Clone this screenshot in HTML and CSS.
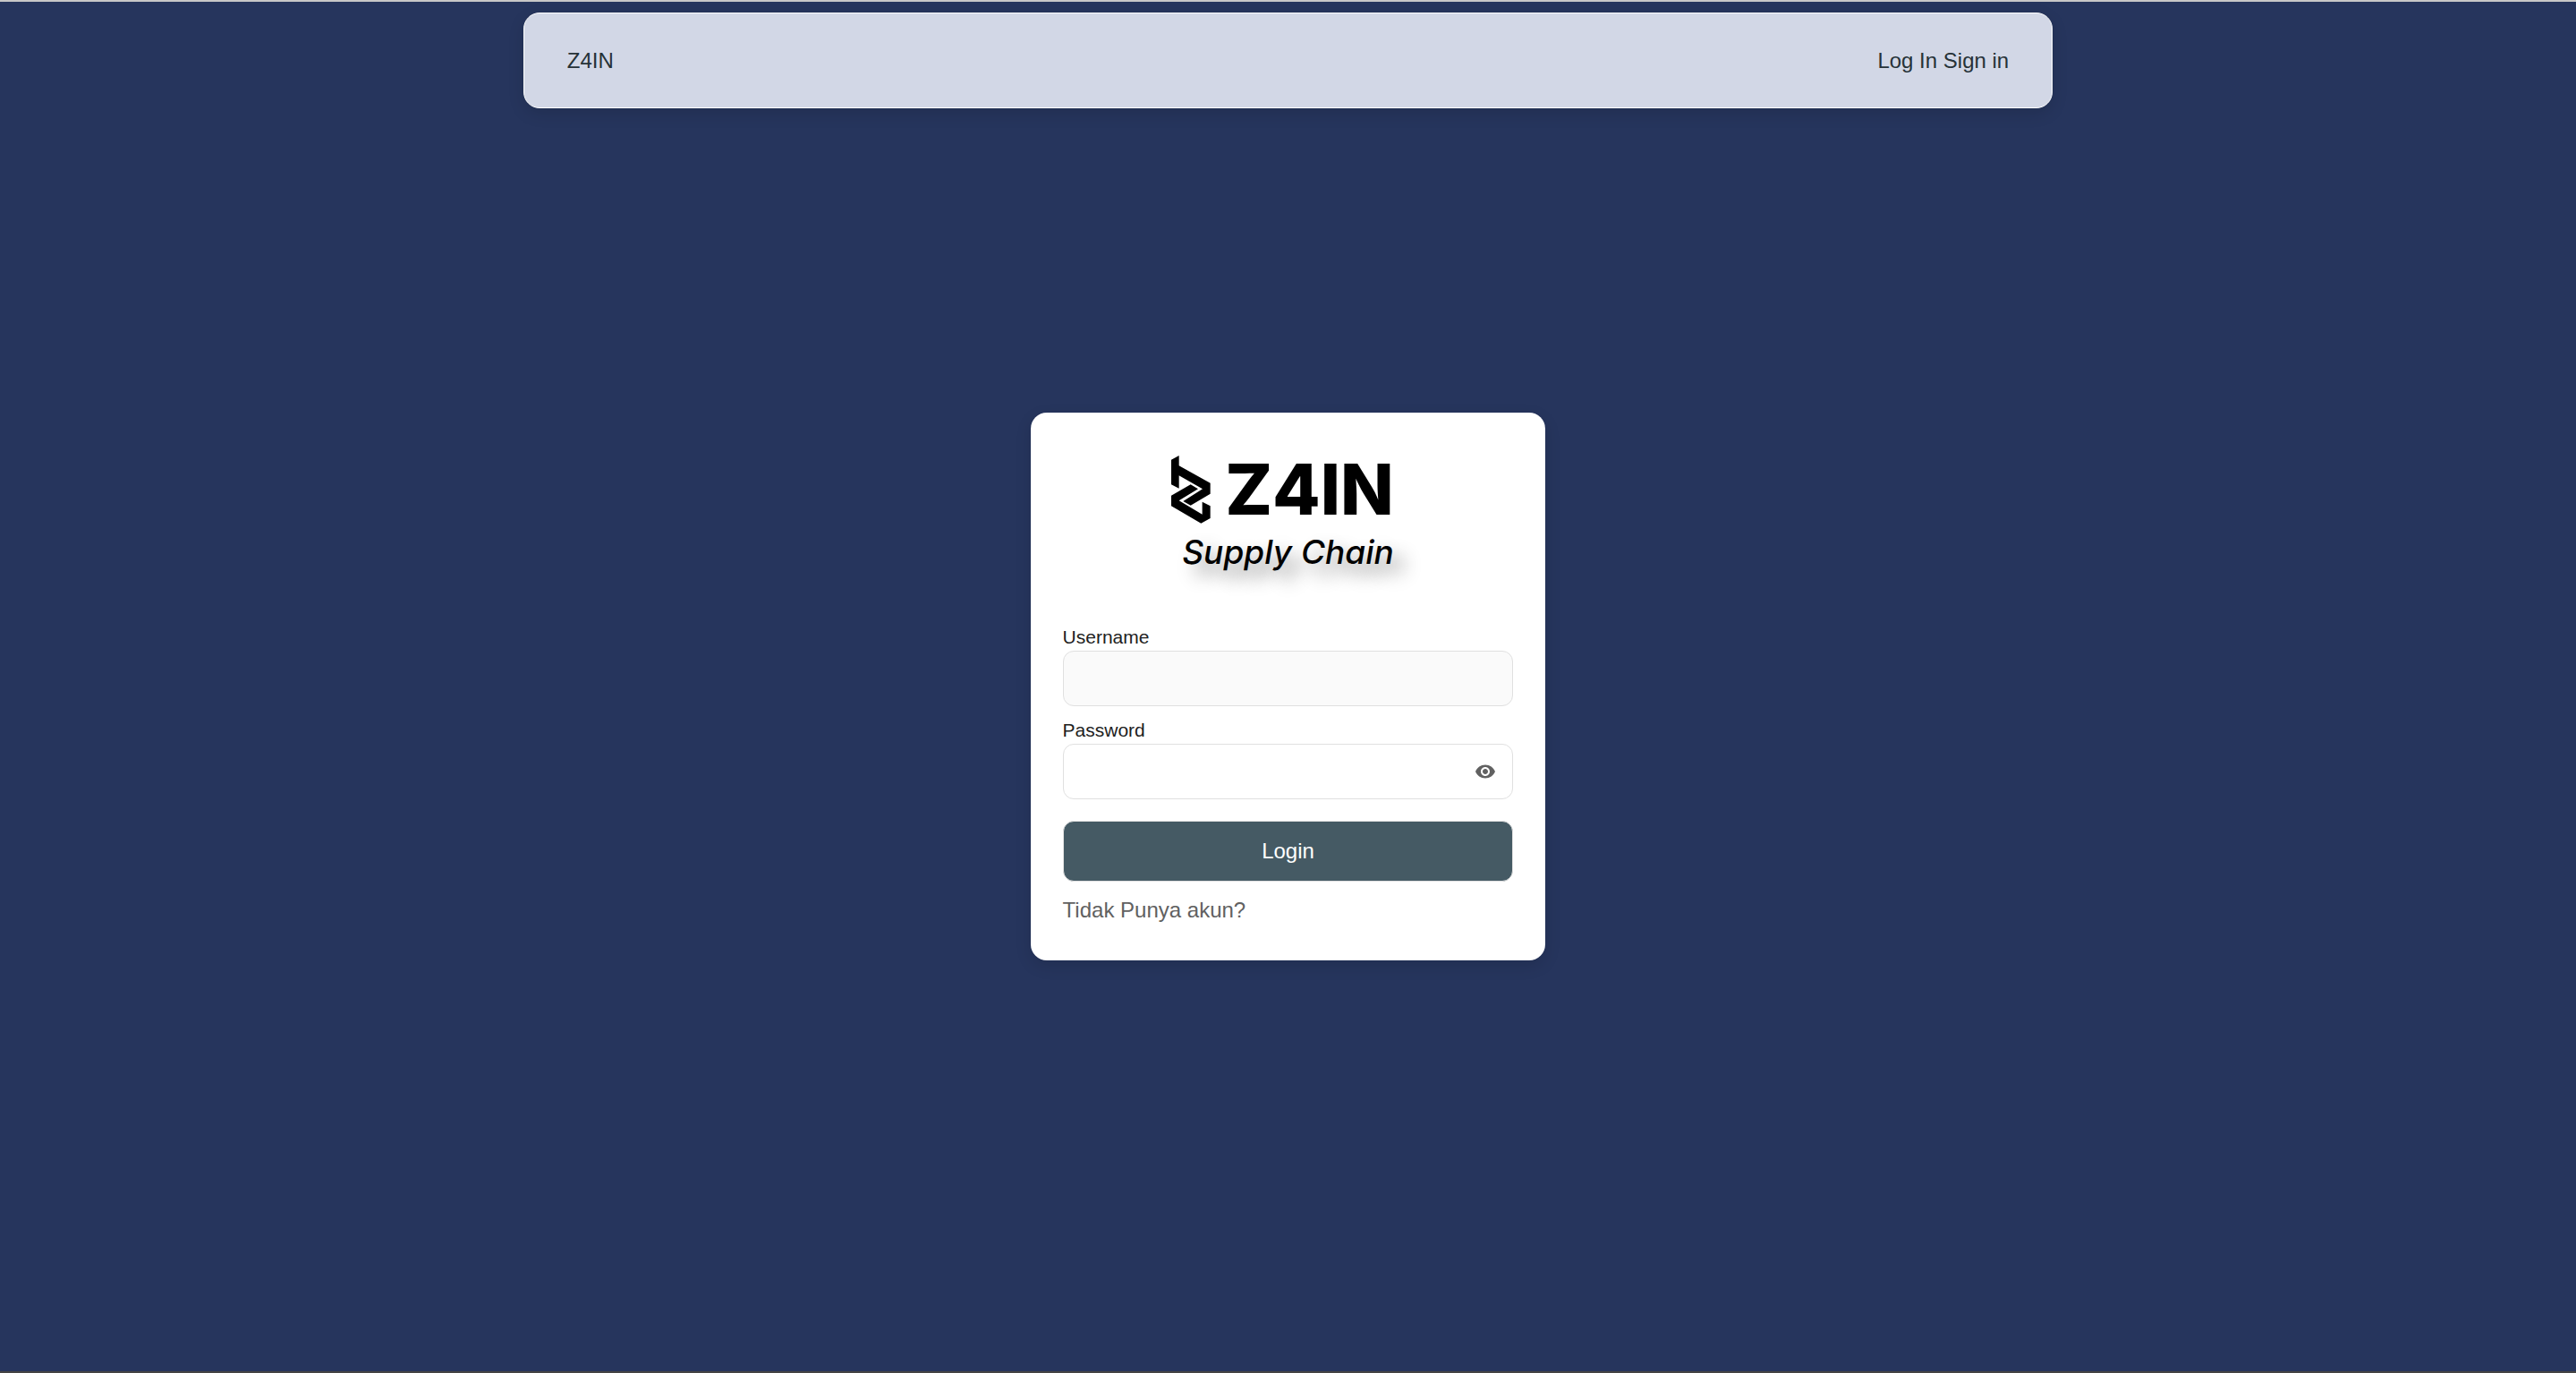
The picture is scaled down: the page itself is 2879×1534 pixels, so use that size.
FILE: index.html
```html
<!DOCTYPE html>
<html lang="id">
<head>
<meta charset="utf-8">
<meta name="viewport" content="width=device-width, initial-scale=1">
<title>Z4IN Supply Chain</title>
<link rel="stylesheet" href="styles.css">
</head>
<body>
<header class="navbar">
  <a class="nav-link" href="#">Z4IN</a>
  <nav>
    <a class="nav-link" href="#">Log In</a>
    <a class="nav-link" href="#">Sign in</a>
  </nav>
</header>
<main class="page">
  <form class="card">
    <div class="logo">
      <div class="logo-group">
        <div class="logo-row">
          <svg class="logo-mark" viewBox="508 178 132 228" aria-hidden="true">
            <path d="M508 192L534 178V212L639 270V306L573 345L548 331L613 290L534 245V288L508 275Z"/>
            <path d="M508 312L573 275L598 290L534 329L612 375V333L639 347V388L608 405L508 347Z"/>
          </svg>
          <span class="logo-name">Z4IN</span>
        </div>
        <span class="logo-tagline">Supply Chain</span>
      </div>
    </div>
    <div class="field">
      <label for="username">Username</label>
      <div class="control control-shaded">
        <input id="username" type="text">
      </div>
    </div>
    <div class="field">
      <label for="password">Password</label>
      <div class="control">
        <input id="password" type="password">
        <button class="reveal" type="button" aria-label="Show password">
          <svg viewBox="0 0 24 24" aria-hidden="true"><path d="M12 4.500C7 4.500 2.730 7.610 1 12c1.730 4.390 6 7.500 11 7.500s9.270-3.110 11-7.500c-1.730-4.390-6-7.500-11-7.500zM12 17c-2.760 0-5-2.240-5-5s2.240-5 5-5 5 2.240 5 5-2.240 5-5 5zm0-8c-1.660 0-3 1.340-3 3s1.340 3 3 3 3-1.340 3-3-1.340-3-3-3z"/></svg>
        </button>
      </div>
    </div>
    <button class="submit" type="submit">Login</button>
    <a class="register" href="#">Tidak Punya akun?</a>
  </form>
</main>
</body>
</html>
```
FILE: styles.css
```css
* {
  box-sizing: border-box;
}

body {
  margin: 0;
  min-height: 100vh;
  display: grid;
  background: #26355d;
  border-top: 2px solid #c8c8c8;
  border-bottom: 2px solid #444;
  font-family: "Liberation Sans", Arial, sans-serif;
  font-size: 24px;
  line-height: 36px;
}

/* The bar shares the grid cell with the page so the card stays centred. */
.navbar,
.page {
  grid-area: 1 / 1;
}

.navbar {
  align-self: start;
  justify-self: center;
  width: calc(60% - 18px);
  margin-top: 12px;
  padding: 35px 48px 34px;
  display: flex;
  justify-content: space-between;
  align-items: center;
  background: #d2d7e6;
  border: 1px solid #fff;
  border-radius: 18px;
  box-shadow: 0 6px 18px rgba(0, 0, 0, 0.12);
}

.nav-link {
  color: #263238;
  text-decoration: none;
}

.page {
  display: flex;
  justify-content: center;
  align-items: center;
}

.card {
  width: 20%;
  min-width: 400px;
  padding: 36px 36px 38px;
  display: flex;
  flex-direction: column;
  background: #fff;
  border-radius: 18px;
  box-shadow: 0 6px 18px rgba(0, 0, 0, 0.12);
}

.logo {
  display: flex;
  justify-content: center;
  padding: 12px 12px 56px 0;
  color: #000;
}

.logo-group {
  display: flex;
  flex-direction: column;
  align-items: flex-end;
  gap: 8px;
  font-family: Inter, sans-serif;
}

.logo-row {
  display: flex;
  align-items: center;
  gap: 16px;
}

.logo-mark {
  width: 44px;
  height: 76px;
}

.logo-name {
  font-size: 78px;
  font-weight: 800;
  line-height: 76px;
}

.logo-tagline {
  font-size: 37px;
  font-style: italic;
  font-weight: 500;
  line-height: 48px;
  text-shadow: 12px 12px 20px rgba(0, 0, 0, 0.45);
}

.field {
  margin-bottom: 12px;
}

.field label {
  display: block;
  color: #212121;
  font-size: 21px;
  line-height: 30px;
}

.control {
  height: 62px;
  padding: 0 18px;
  display: flex;
  align-items: center;
  background: #fff;
  border: 1px solid #e0e0e0;
  border-radius: 12px;
}

.control-shaded {
  background: #fafafa;
}

.control input {
  flex: 1;
  min-width: 0;
  height: 100%;
  padding: 0;
  background: transparent;
  border: 0;
  outline: 0;
  font: inherit;
}

.reveal {
  width: 24px;
  height: 24px;
  padding: 0;
  background: none;
  border: 0;
}

.reveal svg {
  display: block;
  fill: #616161;
}

.submit {
  height: 68px;
  margin: 12px 0 14px;
  background: #455a64;
  border: 1px solid #e0e0e0;
  border-radius: 12px;
  color: #fff;
  font: inherit;
}

.register {
  align-self: flex-start;
  color: #616161;
  text-decoration: none;
}
```
